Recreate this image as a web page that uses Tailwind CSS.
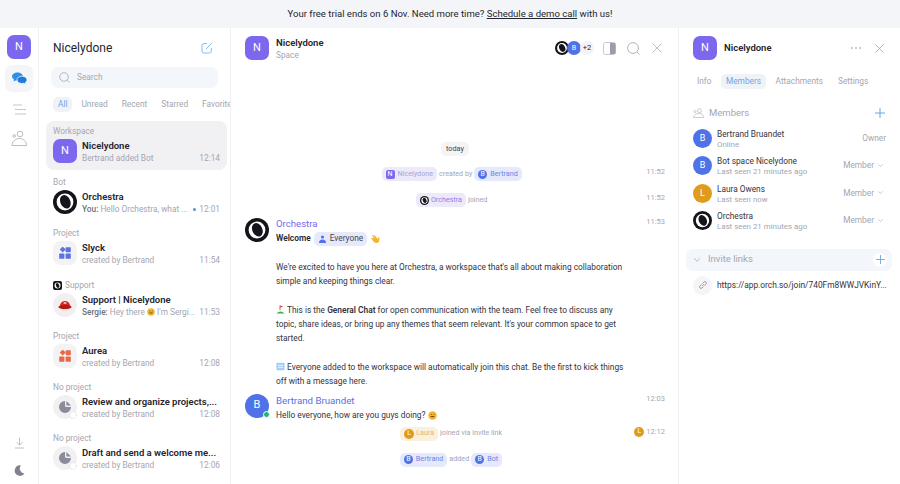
<!DOCTYPE html>
<html lang="en">
<head>
  <meta charset="UTF-8" />
  <title>Nicelydone</title>
  <script src="https://cdn.jsdelivr.net/npm/@tailwindcss/browser@4"></script>
</head>
<body class="w-[900px] h-[484px] overflow-hidden bg-white font-['Roboto',sans-serif] text-[#24242e]">
  <!-- trial banner -->
  <div class="h-[28px] bg-[#f4f5f9] flex items-center justify-center text-[9.55px] text-[#24242e]">
    <span>Your free trial ends on 6 Nov. Need more time? <u>Schedule a demo call</u> with us!</span>
  </div>

  <div class="flex h-[456px]">
    <!-- rail -->
    <div class="w-[39px] shrink-0 border-r border-[#f0f0f3] flex flex-col items-center pt-[7px] pb-[7px]">
      <div class="w-[24px] h-[24px] rounded-[7px] bg-[#7b68ee] text-white text-[11px] flex items-center justify-center">N</div>
      <div class="mt-[6px] w-[28px] h-[27px] rounded-[7px] bg-[#f3f5f8] flex items-center justify-center">
        <svg width="15" height="13" viewBox="0 0 15 13"><path d="M5.5 0.5C8.5 0.5 11 2.2 11 4.6S8.5 8.6 5.5 8.6C4.8 8.6 4.2 8.5 3.6 8.4L1.6 9.6L2 7.4C.8 6.6 0 5.7 0 4.6 0 2.2 2.5.5 5.5.5Z" fill="#2f8fe8"/><path d="M10 4.2C12.8 4.2 15 5.8 15 7.8 15 8.9 14.4 9.8 13.4 10.4L13.8 12.4L11.8 11.3C11.2 11.4 10.6 11.5 10 11.5 7.2 11.5 5 9.9 5 7.8S7.2 4.2 10 4.2Z" fill="#1f7bd8" stroke="#f3f5f8" stroke-width=".8"/></svg>
      </div>
      <svg class="mt-[12px]" width="15" height="11" viewBox="0 0 15 11" fill="none" stroke="#c5c7cf" stroke-width="1"><path d="M1 1h9M3 5.5h11M3 10h11"/></svg>
      <svg class="mt-[15px]" width="16" height="17" viewBox="0 0 16 17" fill="none" stroke="#a9abb5" stroke-width=".8"><circle cx="9" cy="4" r="2.8"/><circle cx="3.2" cy="6" r="1.3"/><path d="M1 15.5C1 11.5 4.5 8.5 8.5 8.5S15.5 11.5 15.5 15.5Z"/></svg>
      <div class="mt-auto flex flex-col items-center">
        <svg width="11" height="12" viewBox="0 0 11 12" fill="none" stroke="#b6b8c1" stroke-width=".9"><path d="M5.5 0.5V8M2.5 5.2L5.5 8.2L8.5 5.2M1 11h9"/></svg>
        <svg class="mt-[16px] mb-[1px]" width="11" height="11" viewBox="0 0 11 11"><path d="M7 .5A5.2 5.2 0 1 0 10.5 8.2 4.6 4.6 0 0 1 7 .5Z" fill="#7f818e"/></svg>
      </div>
    </div>

    <!-- chat list -->
    <div class="w-[192px] shrink-0 border-r border-[#f0f0f3] overflow-hidden">
      <div class="h-[39px] pl-[14px] pr-[17px] flex items-center justify-between">
        <span class="text-[12px] text-[#24242e]">Nicelydone</span>
        <svg width="12" height="12" viewBox="0 0 12 12" fill="none" stroke="#7db4e8" stroke-width=".9"><path d="M6 1.6H3A2 2 0 0 0 1 3.6V9A2 2 0 0 0 3 11H8.4A2 2 0 0 0 10.4 9V6M5 7L10.8 1.2"/></svg>
      </div>
      <div class="mx-[12px] h-[21px] rounded-[7px] bg-[#f3f6fa] flex items-center pl-[8px] text-[8.3px] text-[#a4a6b0]">
        <svg width="11" height="11" viewBox="0 0 11 11" fill="none" stroke="#a4a6b0" stroke-width=".8"><circle cx="5" cy="5" r="4.3"/><path d="M8.2 8.2L10.5 10.5"/></svg>
        <span class="ml-[7px]">Search</span>
      </div>
      <div class="mt-[9px] h-[15px] ml-[14px] flex items-center text-[8.3px] text-[#a4a6b0] whitespace-nowrap">
        <span class="px-[5px] h-[15px] leading-[15px] rounded-[5px] bg-[#eff3f8] text-[#6ea6de]">All</span>
        <span class="ml-[9px]">Unread</span>
        <span class="ml-[14px]">Recent</span>
        <span class="ml-[14px]">Starred</span>
        <span class="ml-[14px]">Favorites</span>
      </div>

      <div class="mt-[9px] mx-[7px] w-[181px]">
        <div class="h-[49.2px] mb-[2px] rounded-[8px] bg-[#f1f1f4] px-[7px] pt-[3px]">
          <div class="h-[15px] leading-[14px] text-[8.3px] text-[#a4a6b0]">Workspace</div>
          <div class="flex h-[24px]">
            <div class="w-[24px] h-[24px] rounded-[7px] bg-[#7b68ee] text-white text-[11px] flex items-center justify-center">N</div>
            <div class="ml-[5px] flex-1 min-w-0">
              <div class="text-[9.5px] leading-[13px] font-semibold truncate">Nicelydone</div>
              <div class="flex justify-between text-[8.3px] leading-[13px] text-[#a4a6b0]"><span>Bertrand added Bot</span><span>12:14</span></div>
            </div>
          </div>
        </div>

        <div class="h-[49.2px] mb-[2px] px-[7px] pt-[3px]">
          <div class="h-[15px] leading-[14px] text-[8.3px] text-[#a4a6b0]">Bot</div>
          <div class="flex h-[24px]">
            <svg class="shrink-0" width="24" height="24" viewBox="0 0 24 24"><circle cx="12" cy="12" r="12" fill="#14141a"/><circle cx="12" cy="12" r="8.4" fill="#fff"/><ellipse cx="12.4" cy="12" rx="5" ry="7" fill="#14141a" transform="rotate(-25 12 12)"/></svg>
            <div class="ml-[5px] flex-1 min-w-0">
              <div class="text-[9.5px] leading-[13px] font-semibold truncate">Orchestra</div>
              <div class="flex justify-between text-[8.3px] leading-[13px] text-[#a4a6b0]"><span><b class="font-medium text-[#6d6f7c]">You:</b> Hello Orchestra, what ...</span><span class="flex items-center"><i class="w-[3px] h-[3px] rounded-full bg-[#5c8fd0] mr-[3px]"></i>12:01</span></div>
            </div>
          </div>
        </div>

        <div class="h-[49.2px] mb-[2px] px-[7px] pt-[3px]">
          <div class="h-[15px] leading-[14px] text-[8.3px] text-[#a4a6b0]">Project</div>
          <div class="flex h-[24px]">
            <div class="w-[24px] h-[24px] shrink-0 rounded-[8px] bg-[#f3f3f6] flex items-center justify-center">
              <svg width="12" height="12" viewBox="0 0 12 12" fill="#5b73e0"><rect x="1.6" y=".4" width="4.2" height="4.2" transform="rotate(45 3.7 2.5)"/><rect x="6.6" y=".2" width="5.2" height="5" rx=".6"/><rect x=".2" y="6.6" width="5.2" height="5.2" rx=".6"/><rect x="6.6" y="6.6" width="5.2" height="5.2" rx=".6"/></svg>
            </div>
            <div class="ml-[5px] flex-1 min-w-0">
              <div class="text-[9.5px] leading-[13px] font-semibold truncate">Slyck</div>
              <div class="flex justify-between text-[8.3px] leading-[13px] text-[#a4a6b0]"><span>created by Bertrand</span><span>11:54</span></div>
            </div>
          </div>
        </div>

        <div class="h-[49.2px] mb-[2px] px-[7px] pt-[3px]">
          <div class="h-[15px] leading-[14px] text-[8.3px] text-[#a4a6b0] flex items-center">
            <svg class="mr-[3px]" width="9" height="9" viewBox="0 0 9 9"><rect width="9" height="9" rx="2" fill="#14141a"/><circle cx="4.5" cy="4.5" r="3" fill="#fff"/><ellipse cx="4.6" cy="4.5" rx="1.6" ry="2.5" fill="#14141a" transform="rotate(-25 4.5 4.5)"/></svg>Support
          </div>
          <div class="flex h-[24px]">
            <div class="w-[24px] h-[24px] shrink-0 rounded-full bg-[#f3eff1] flex items-center justify-center">
              <svg width="14" height="12" viewBox="0 0 14 12"><path d="M2 7A5 5 0 0 1 12 7Z" fill="#d8261f"/><ellipse cx="7" cy="8" rx="6.6" ry="2" fill="#b01a16"/><ellipse cx="7" cy="4" rx="1.6" ry="1" fill="#fff" opacity=".7"/><path d="M4 10.4h6L9 11.6H5Z" fill="#e8c9c4"/></svg>
            </div>
            <div class="ml-[5px] flex-1 min-w-0">
              <div class="text-[9.5px] leading-[13px] font-semibold truncate">Support | Nicelydone</div>
              <div class="flex justify-between text-[8.3px] leading-[13px] text-[#a4a6b0]"><span class="flex items-center"><b class="font-medium text-[#6d6f7c]">Sergie:</b>&nbsp;Hey there&nbsp;<svg width="8" height="8" viewBox="0 0 8 8"><circle cx="4" cy="4" r="3.8" fill="#f2b632"/><path d="M2 4.4C2.6 6 5.4 6 6 4.4Z" fill="#7a4a10"/><circle cx="2.8" cy="2.9" r=".5" fill="#7a4a10"/><circle cx="5.2" cy="2.9" r=".5" fill="#7a4a10"/></svg>&nbsp;I'm Sergi...</span><span>11:53</span></div>
            </div>
          </div>
        </div>

        <div class="h-[49.2px] mb-[2px] px-[7px] pt-[3px]">
          <div class="h-[15px] leading-[14px] text-[8.3px] text-[#a4a6b0]">Project</div>
          <div class="flex h-[24px]">
            <div class="w-[24px] h-[24px] shrink-0 rounded-[8px] bg-[#f3f3f6] flex items-center justify-center">
              <svg width="12" height="12" viewBox="0 0 12 12" fill="#e8694a"><rect x="1.6" y=".4" width="4.2" height="4.2" transform="rotate(45 3.7 2.5)"/><rect x="6.6" y=".2" width="5.2" height="5" rx=".6"/><rect x=".2" y="6.6" width="5.2" height="5.2" rx=".6"/><rect x="6.6" y="6.6" width="5.2" height="5.2" rx=".6"/></svg>
            </div>
            <div class="ml-[5px] flex-1 min-w-0">
              <div class="text-[9.5px] leading-[13px] font-semibold truncate">Aurea</div>
              <div class="flex justify-between text-[8.3px] leading-[13px] text-[#a4a6b0]"><span>created by Bertrand</span><span>12:08</span></div>
            </div>
          </div>
        </div>

        <div class="h-[49.2px] mb-[2px] px-[7px] pt-[3px]">
          <div class="h-[15px] leading-[14px] text-[8.3px] text-[#a4a6b0]">No project</div>
          <div class="flex h-[24px]">
            <div class="relative w-[24px] h-[24px] shrink-0 rounded-full bg-[#f1f1f3] flex items-center justify-center">
              <svg width="12" height="12" viewBox="0 0 12 12"><path d="M6 0A6 6 0 1 0 12 6H7.5A1.5 1.5 0 0 1 6 4.5Z" fill="#8a8c9a"/><path d="M7.4 0L12 4.4H7.4Z" fill="#8a8c9a"/></svg>
              <svg class="absolute right-0 bottom-0" width="8" height="8" viewBox="0 0 8 8"><circle cx="4" cy="4" r="3.4" fill="#fff" stroke="#c5c7cf" stroke-width=".7" stroke-dasharray="1 1"/></svg>
            </div>
            <div class="ml-[5px] flex-1 min-w-0">
              <div class="text-[9.5px] leading-[13px] font-semibold truncate">Review and organize projects,...</div>
              <div class="flex justify-between text-[8.3px] leading-[13px] text-[#a4a6b0]"><span>created by Bertrand</span><span>12:08</span></div>
            </div>
          </div>
        </div>

        <div class="h-[49.2px] mb-[2px] px-[7px] pt-[3px]">
          <div class="h-[15px] leading-[14px] text-[8.3px] text-[#a4a6b0]">No project</div>
          <div class="flex h-[24px]">
            <div class="relative w-[24px] h-[24px] shrink-0 rounded-full bg-[#f1f1f3] flex items-center justify-center">
              <svg width="12" height="12" viewBox="0 0 12 12"><path d="M6 0A6 6 0 1 0 12 6H7.5A1.5 1.5 0 0 1 6 4.5Z" fill="#8a8c9a"/><path d="M7.4 0L12 4.4H7.4Z" fill="#8a8c9a"/></svg>
              <svg class="absolute right-0 bottom-0" width="8" height="8" viewBox="0 0 8 8"><circle cx="4" cy="4" r="3.4" fill="#fff" stroke="#c5c7cf" stroke-width=".7" stroke-dasharray="1 1"/></svg>
            </div>
            <div class="ml-[5px] flex-1 min-w-0">
              <div class="text-[9.5px] leading-[13px] font-semibold truncate">Draft and send a welcome me...</div>
              <div class="flex justify-between text-[8.3px] leading-[13px] text-[#a4a6b0]"><span>created by Bertrand</span><span>12:06</span></div>
            </div>
          </div>
        </div>
      </div>
    </div>

    <!-- chat -->
    <div class="w-[448px] shrink-0 border-r border-[#f0f0f3] pl-[14px] pr-[13px] overflow-hidden">
      <div class="h-[40px] pt-[8px] flex items-start">
        <div class="w-[24px] h-[24px] rounded-[7px] bg-[#7b68ee] text-white text-[11px] flex items-center justify-center">N</div>
        <div class="ml-[7px] mt-[1px]">
          <div class="text-[9.5px] leading-[12px] font-semibold">Nicelydone</div>
          <div class="text-[8.3px] leading-[12px] text-[#a4a6b0]">Space</div>
        </div>
        <div class="ml-auto h-[24px] flex items-center">
          <svg width="14" height="14" viewBox="0 0 24 24"><circle cx="12" cy="12" r="12" fill="#14141a"/><circle cx="12" cy="12" r="8.4" fill="#fff"/><ellipse cx="12.4" cy="12" rx="5" ry="7" fill="#14141a" transform="rotate(-25 12 12)"/></svg>
          <div class="-ml-[2px] w-[14px] h-[14px] rounded-full bg-[#4f72e8] text-white text-[7px] flex items-center justify-center">B</div>
          <div class="-ml-[1px] w-[14px] h-[14px] rounded-full bg-[#f4f3fb] text-[7.5px] flex items-center justify-center">+2</div>
          <svg class="ml-[9px]" width="13" height="13" viewBox="0 0 13 13"><rect x=".5" y=".5" width="12" height="12" rx="2" fill="#fff" stroke="#c5c7cf"/><path d="M7 1h4a1.5 1.5 0 0 1 1.5 1.5v8A1.5 1.5 0 0 1 11 12H7Z" fill="#9b9da8"/></svg>
          <svg class="ml-[11px]" width="13" height="13" viewBox="0 0 13 13" fill="none" stroke="#a9abb5" stroke-width=".9"><circle cx="6" cy="6" r="5.4"/><path d="M10 10L12.6 12.6"/></svg>
          <svg class="ml-[12px] mr-[3px]" width="10" height="10" viewBox="0 0 10 10" fill="none" stroke="#b6b8c1" stroke-width=".9"><path d="M.5.5l9 9M9.5.5l-9 9"/></svg>
        </div>
      </div>

      <div class="mt-[74px] flex justify-center">
        <span class="h-[14px] px-[5.5px] rounded-[5px] bg-[#f4f4f6] text-[7.3px] leading-[14px] text-[#44444f]">today</span>
      </div>

      <div class="mt-[11px] flex items-start h-[14px] text-[7.2px]">
        <div class="flex-1 pl-[12px] flex justify-center items-center text-[#a4a6b0]">
          <span class="h-[14px] px-[4px] rounded-[5px] bg-[#ece9fb] flex items-center text-[#a9a4d0]"><i class="not-italic w-[9px] h-[9px] rounded-[2px] bg-[#7b68ee] text-white text-[7px] flex items-center justify-center mr-[3px]">N</i>Nicelydone</span>
          <span class="mx-[2px]">created by</span>
          <span class="h-[14px] px-[4px] rounded-[5px] bg-[#e5e9fb] flex items-center text-[#6b85e4]"><i class="not-italic w-[9px] h-[9px] rounded-full bg-[#4f72e8] text-white text-[7px] flex items-center justify-center mr-[3px]">B</i>Bertrand</span>
        </div>
        <span class="text-[7.5px] leading-[9px] text-[#a4a6b0]">11:52</span>
      </div>

      <div class="mt-[12px] flex items-start h-[14px] text-[7.2px]">
        <div class="flex-1 pl-[12px] flex justify-center items-center text-[#a4a6b0]">
          <span class="h-[14px] px-[4px] rounded-[5px] bg-[#ece9fb] flex items-center text-[#8f7fe8]"><svg class="mr-[2px]" width="9" height="9" viewBox="0 0 24 24"><circle cx="12" cy="12" r="12" fill="#14141a"/><circle cx="12" cy="12" r="8.4" fill="#fff"/><ellipse cx="12.4" cy="12" rx="5" ry="7" fill="#14141a" transform="rotate(-25 12 12)"/></svg>Orchestra</span>
          <span class="ml-[2px]">joined</span>
        </div>
        <span class="text-[7.5px] leading-[9px] text-[#a4a6b0]">11:52</span>
      </div>

      <div class="mt-[10px] flex items-start">
        <svg class="shrink-0 mt-[1px]" width="24" height="24" viewBox="0 0 24 24"><circle cx="12" cy="12" r="12" fill="#14141a"/><circle cx="12" cy="12" r="8.4" fill="#fff"/><ellipse cx="12.4" cy="12" rx="5" ry="7" fill="#14141a" transform="rotate(-25 12 12)"/></svg>
        <div class="ml-[7px] flex-1 min-w-0">
          <div class="text-[9.6px] leading-[14px] text-[#7b68ee]">Orchestra</div>
          <div class="h-[15px] flex items-center text-[8.35px]">
            <b class="font-semibold">Welcome</b>
            <span class="ml-[3px] h-[14px] px-[4px] rounded-[5px] bg-[#e5e9fb] flex items-center text-[#44444f]"><svg class="mr-[3px]" width="9" height="8" viewBox="0 0 9 8" fill="#4f72e8"><circle cx="4.5" cy="2" r="1.6"/><path d="M1 8A3.5 3.5 0 0 1 8 8Z"/></svg>Everyone</span>
            <svg class="ml-[3px]" width="10" height="10" viewBox="0 0 9 9"><path d="M1 4L3 6.6C4 8.4 6.8 8.8 8 7L8.6 3.4 7.4 3 7 4.6 4 1 3.4 1.6 4.8 3.6 2.4.6 1.8 1.2 3.6 4 1.6 3.4Z" fill="#f2b632"/></svg>
          </div>
          <div class="mt-[14px] w-[360px] text-[8.35px] leading-[14.3px] text-[#33333d]">
            <p>We're excited to have you here at Orchestra, a workspace that's all about making collaboration<br>simple and keeping things clear.</p>
            <p class="mt-[14.3px]"><svg class="inline-block align-[-1px]" width="9" height="9" viewBox="0 0 9 9"><path d="M4 .5V5" stroke="#d8261f" stroke-width=".8"/><path d="M4.4.5L7 1.6 4.4 2.6Z" fill="#d8261f"/><path d="M.4 8.5Q4.5 4.6 8.6 8.5Z" fill="#4aa84a"/></svg> This is the <b class="font-semibold">General Chat</b> for open communication with the team. Feel free to discuss any<br>topic, share ideas, or bring up any themes that seem relevant. It's your common space to get<br>started.</p>
            <p class="mt-[14.3px]"><svg class="inline-block align-[-1px]" width="9" height="9" viewBox="0 0 9 9"><rect x=".4" y=".8" width="8.2" height="7.4" rx="1" fill="#a8cdee"/><path d="M2 3.4h5M2 5.6h5" stroke="#fff" stroke-width=".8"/></svg> Everyone added to the workspace will automatically join this chat. Be the first to kick things<br>off with a message here.</p>
          </div>
        </div>
        <span class="text-[7.5px] leading-[9px] text-[#a4a6b0]">11:53</span>
      </div>

      <div class="mt-[5px] flex items-start">
        <div class="relative shrink-0 w-[24px] h-[24px] rounded-full bg-[#4f72e8] text-white text-[11px] flex items-center justify-center">B
          <i class="absolute -right-[1px] bottom-0 w-[7px] h-[7px] rounded-full bg-[#22b573] border border-white"></i>
        </div>
        <div class="ml-[7px] flex-1 min-w-0">
          <div class="text-[9.7px] leading-[14px] text-[#4f72e8]">Bertrand Bruandet</div>
          <div class="h-[15px] flex items-center text-[8.35px] text-[#33333d]">Hello everyone, how are you guys doing?&nbsp;<svg width="9" height="9" viewBox="0 0 8 8"><circle cx="4" cy="4" r="3.8" fill="#f2b632"/><path d="M2 4.4C2.6 6 5.4 6 6 4.4Z" fill="#7a4a10"/><circle cx="2.8" cy="2.9" r=".5" fill="#7a4a10"/><circle cx="5.2" cy="2.9" r=".5" fill="#7a4a10"/></svg></div>
        </div>
        <span class="text-[7.5px] leading-[9px] text-[#a4a6b0]">12:03</span>
      </div>

      <div class="mt-[4px] flex items-start h-[14px] text-[7.2px]">
        <div class="flex-1 pl-[23px] flex justify-center items-center text-[#a4a6b0]">
          <span class="h-[14px] px-[4px] rounded-[5px] bg-[#fbefdd] flex items-center text-[#e0b87a]"><i class="not-italic w-[10px] h-[10px] rounded-full bg-[#e09a1c] text-white text-[7px] flex items-center justify-center mr-[2px]">L</i>Laura</span>
          <span class="ml-[2px]">joined via invite link</span>
        </div>
        <i class="not-italic w-[10px] h-[10px] rounded-full bg-[#e09a1c] text-white text-[7px] flex items-center justify-center mr-[2px]">L</i>
        <span class="text-[7.5px] leading-[10px] text-[#a4a6b0]">12:12</span>
      </div>

      <div class="mt-[12px] flex items-start h-[14px] text-[7.2px]">
        <div class="flex-1 pl-[12px] pr-[20px] flex justify-center items-center text-[#a4a6b0]">
          <span class="h-[14px] px-[4px] rounded-[5px] bg-[#e5e9fb] flex items-center text-[#6b85e4]"><i class="not-italic w-[9px] h-[9px] rounded-full bg-[#4f72e8] text-white text-[7px] flex items-center justify-center mr-[3px]">B</i>Bertrand</span>
          <span class="mx-[2px]">added</span>
          <span class="h-[14px] px-[4px] rounded-[5px] bg-[#e5e9fb] flex items-center text-[#6b85e4]"><i class="not-italic w-[9px] h-[9px] rounded-full bg-[#4f72e8] text-white text-[7px] flex items-center justify-center mr-[3px]">B</i>Bot</span>
        </div>
      </div>
    </div>

    <!-- right panel -->
    <div class="flex-1 min-w-0 overflow-hidden">
      <div class="h-[40px] pl-[14px] pr-[16px] pt-[8px] flex items-start">
        <div class="w-[24px] h-[24px] rounded-[7px] bg-[#7b68ee] text-white text-[11px] flex items-center justify-center">N</div>
        <span class="ml-[7px] h-[24px] leading-[24px] text-[9.5px] font-semibold">Nicelydone</span>
        <div class="ml-auto h-[24px] flex items-center">
          <svg width="10" height="2" viewBox="0 0 10 2" fill="#8a8c98"><circle cx="1" cy="1" r=".8"/><circle cx="5" cy="1" r=".8"/><circle cx="9" cy="1" r=".8"/></svg>
          <svg class="ml-[14px]" width="9" height="9" viewBox="0 0 10 10" fill="none" stroke="#a4a6b0" stroke-width=".9"><path d="M.5.5l9 9M9.5.5l-9 9"/></svg>
        </div>
      </div>
      <div class="mt-[6px] ml-[18px] h-[15px] flex items-center text-[8.3px] text-[#a4a6b0] whitespace-nowrap">
        <span>Info</span>
        <span class="ml-[10px] h-[15px] px-[4.5px] leading-[15px] rounded-[5px] bg-[#eff3f8] text-[#6ea6de]">Members</span>
        <span class="ml-[10px]">Attachments</span>
        <span class="ml-[15px]">Settings</span>
      </div>

      <div class="mt-[17px] pl-[14px] pr-[15px] h-[14px] flex items-center text-[9.5px] text-[#a4a6b0]">
        <svg width="11" height="10" viewBox="0 0 11 10" fill="none" stroke="#b6b8c1" stroke-width=".7"><circle cx="6.5" cy="2.6" r="2"/><circle cx="2" cy="3.6" r="1"/><path d="M.5 9.5C.5 7 3 5.4 6 5.4S10.5 7 10.5 9.5Z"/></svg>
        <span class="ml-[5px]">Members</span>
        <svg class="ml-auto" width="10" height="10" viewBox="0 0 10 10" stroke="#6ea6de" stroke-width="1"><path d="M5 0v10M0 5h10"/></svg>
      </div>

      <div class="mt-[9px] pl-[14px] pr-[14px]">
        <div class="h-[27.4px] flex items-start">
          <div class="shrink-0 w-[19px] h-[19px] rounded-full bg-[#4f72e8] text-white text-[9px] flex items-center justify-center">B</div>
          <div class="ml-[5px] flex-1 min-w-0">
            <div class="text-[8.3px] leading-[10px] text-[#33333d]">Bertrand Bruandet</div>
            <div class="text-[7.9px] leading-[12px] text-[#a4a6b0]">Online</div>
          </div>
          <span class="mt-[4px] text-[8.3px] leading-[10px] text-[#a4a6b0]">Owner</span>
        </div>
        <div class="h-[27.4px] flex items-start">
          <div class="shrink-0 w-[19px] h-[19px] rounded-full bg-[#4f72e8] text-white text-[9px] flex items-center justify-center">B</div>
          <div class="ml-[5px] flex-1 min-w-0">
            <div class="text-[8.3px] leading-[10px] text-[#33333d]">Bot space Nicelydone</div>
            <div class="text-[7.9px] leading-[12px] text-[#a4a6b0]">Last seen 21 minutes ago</div>
          </div>
          <span class="mt-[4px] flex items-center text-[8.3px] leading-[10px] text-[#a4a6b0]">Member<svg class="ml-[4px] mr-[3px]" width="5" height="3" viewBox="0 0 5 3" fill="none" stroke="#a4a6b0" stroke-width=".6"><path d="M.3.3L2.5 2.5 4.7.3"/></svg></span>
        </div>
        <div class="h-[27.4px] flex items-start">
          <div class="shrink-0 w-[19px] h-[19px] rounded-full bg-[#e09a1c] text-white text-[9px] flex items-center justify-center">L</div>
          <div class="ml-[5px] flex-1 min-w-0">
            <div class="text-[8.3px] leading-[10px] text-[#33333d]">Laura Owens</div>
            <div class="text-[7.9px] leading-[12px] text-[#a4a6b0]">Last seen now</div>
          </div>
          <span class="mt-[4px] flex items-center text-[8.3px] leading-[10px] text-[#a4a6b0]">Member<svg class="ml-[4px] mr-[3px]" width="5" height="3" viewBox="0 0 5 3" fill="none" stroke="#a4a6b0" stroke-width=".6"><path d="M.3.3L2.5 2.5 4.7.3"/></svg></span>
        </div>
        <div class="h-[27.4px] flex items-start">
          <svg class="shrink-0" width="19" height="19" viewBox="0 0 24 24"><circle cx="12" cy="12" r="12" fill="#14141a"/><circle cx="12" cy="12" r="8.4" fill="#fff"/><ellipse cx="12.4" cy="12" rx="5" ry="7" fill="#14141a" transform="rotate(-25 12 12)"/></svg>
          <div class="ml-[5px] flex-1 min-w-0">
            <div class="text-[8.3px] leading-[10px] text-[#33333d]">Orchestra</div>
            <div class="text-[7.9px] leading-[12px] text-[#a4a6b0]">Last seen 21 minutes ago</div>
          </div>
          <span class="mt-[4px] flex items-center text-[8.3px] leading-[10px] text-[#a4a6b0]">Member<svg class="ml-[4px] mr-[3px]" width="5" height="3" viewBox="0 0 5 3" fill="none" stroke="#a4a6b0" stroke-width=".6"><path d="M.3.3L2.5 2.5 4.7.3"/></svg></span>
        </div>
      </div>

      <div class="mt-[10px] ml-[7px] mr-[8px] h-[22px] rounded-[7px] bg-[#f3f6fa] pl-[8px] pr-[5px] flex items-center text-[9.5px] text-[#a4a6b0]">
        <svg width="6" height="4" viewBox="0 0 6 4" fill="none" stroke="#a4a6b0" stroke-width=".7"><path d="M.3.3L3 3.3 5.7.3"/></svg>
        <span class="ml-[8px]">Invite links</span>
        <span class="ml-auto w-[14px] h-[14px] rounded-full bg-white flex items-center justify-center"><svg width="9" height="9" viewBox="0 0 10 10" stroke="#6ea6de" stroke-width="1"><path d="M5 0v10M0 5h10"/></svg></span>
      </div>

      <div class="mt-[5px] pl-[14px] pr-[15px] h-[19px] flex items-center">
        <div class="shrink-0 w-[19px] h-[19px] rounded-full bg-[#f5f5f7] flex items-center justify-center">
          <svg width="10" height="10" viewBox="0 0 10 10" fill="none" stroke="#8a8c98" stroke-width=".8"><path d="M4.2 5.8L5.8 4.2M3.6 4.4L2 6A1.4 1.4 0 0 0 4 8L5.6 6.4M4.4 3.6L6 2A1.4 1.4 0 0 1 8 4L6.4 5.6"/></svg>
        </div>
        <span class="ml-[5px] min-w-0 whitespace-nowrap text-[8.4px] text-[#33333d]">https://app.orch.so/join/740Fm8WWJVKinY...</span>
      </div>
    </div>
  </div>
</body>
</html>
